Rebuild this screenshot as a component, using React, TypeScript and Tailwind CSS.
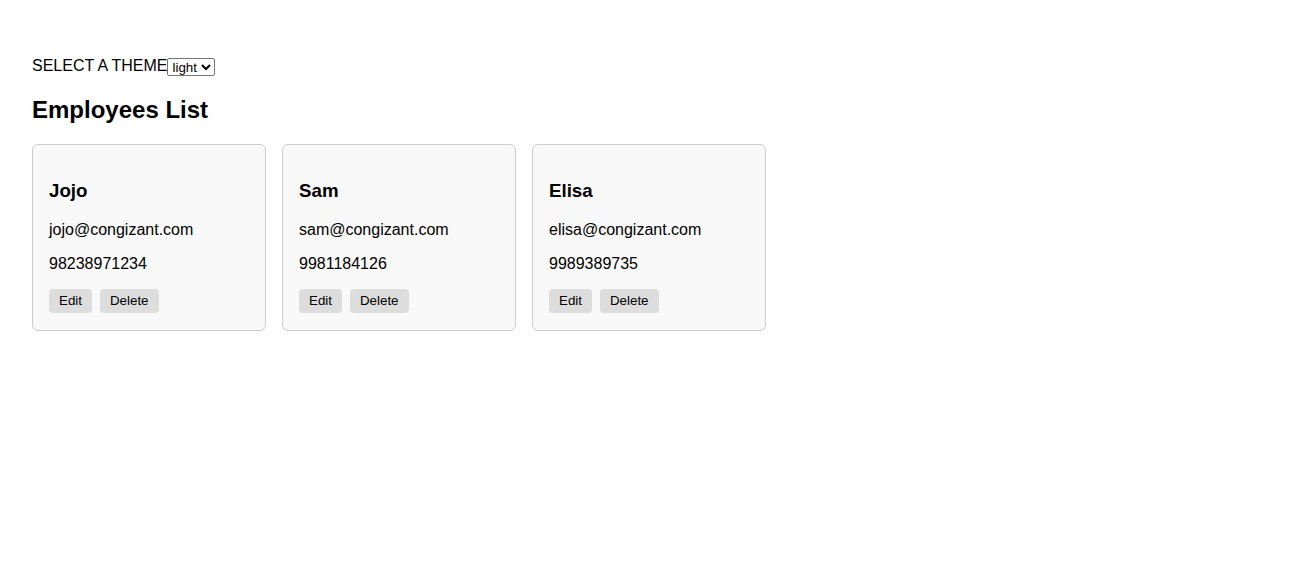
import { useState } from 'react'

type Employee = {
  id: number
  name: string
  email: string
  phone: string
}

const employees: Employee[] = [
  { id: 1, name: 'Jojo', email: 'jojo@congizant.com', phone: '98238971234' },
  { id: 2, name: 'Sam', email: 'sam@congizant.com', phone: '9981184126' },
  { id: 3, name: 'Elisa', email: 'elisa@congizant.com', phone: '9989389735' },
]

function EmployeeCard({ employee }: { employee: Employee }) {
  return (
    <div className="w-[234px] border border-[#cccccc] rounded-[6px] bg-[#f9f9f9] px-4 pb-[17px] pt-4">
      <h3 className="mt-[18.72px] text-[18.72px] leading-[22px] font-bold">{employee.name}</h3>
      <p className="mt-[19.5px] text-base leading-[18.4px]">{employee.email}</p>
      <p className="mt-[15.5px] text-base leading-[18.4px]">{employee.phone}</p>
      <div className="mt-[15px] flex gap-2">
        <button className="h-6 px-[10px] rounded-[4px] bg-[#dddddd] text-[13.33px] leading-[15px]">
          Edit
        </button>
        <button className="h-6 px-[10px] rounded-[4px] bg-[#dddddd] text-[13.33px] leading-[15px]">
          Delete
        </button>
      </div>
    </div>
  )
}

export default function App() {
  const [theme, setTheme] = useState('light')

  return (
    <div className="min-h-screen bg-white px-8 pt-[56px] text-black font-['Liberation_Sans',Arial,sans-serif]">
      <div className="flex items-center h-5">
        <label className="text-base leading-[18.4px]">SELECT A THEME</label>
        <select
          value={theme}
          onChange={(e) => setTheme(e.target.value)}
          className="h-[18px] mt-[2px] border border-[#767676] rounded-[2px] bg-white text-[13.33px] text-black"
        >
          <option value="light">light</option>
          <option value="dark">dark</option>
        </select>
      </div>

      <h2 className="mt-5 text-2xl leading-[28px] font-bold">Employees List</h2>

      <div className="mt-5 flex gap-4">
        {employees.map((employee) => (
          <EmployeeCard key={employee.id} employee={employee} />
        ))}
      </div>
    </div>
  )
}
